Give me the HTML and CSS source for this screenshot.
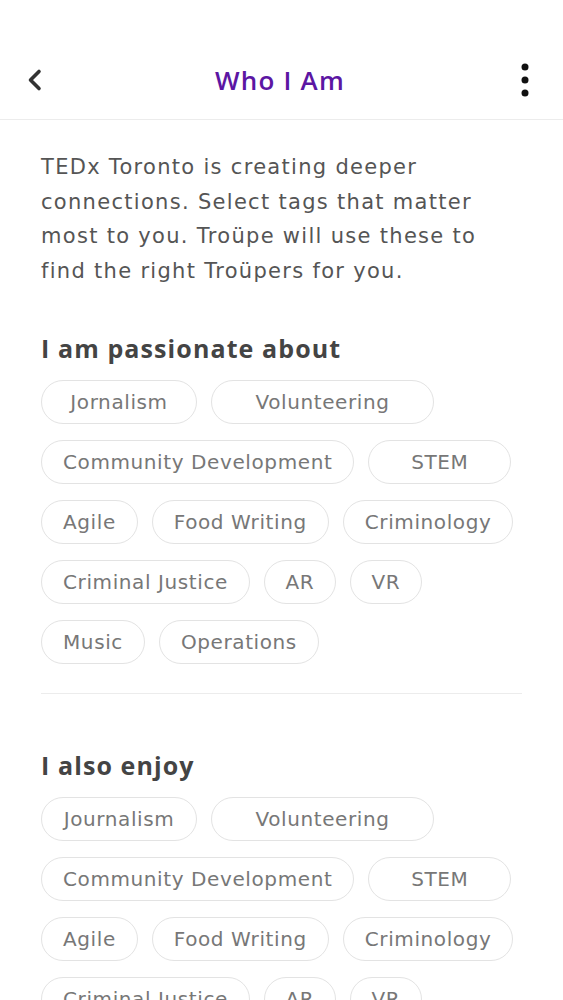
FILE: index.html
```html
<!DOCTYPE html>
<html lang="en">
<head>
    <meta charset="UTF-8">
    <meta name="viewport" content="width=device-width, initial-scale=1.0">
    <title>Who I Am</title>
    <link rel="stylesheet" href="styles.css">
</head>
<body>
    <!-- Top bar -->
    <header class="topbar">
        <button class="iconButton" aria-label="Back">
            <svg viewBox="0 0 24 24" width="24" height="24"><path d="M16 3.5 L7.5 12 L16 20.5" fill="none" stroke="#333" stroke-width="3.6" stroke-linecap="round" stroke-linejoin="round"/></svg>
        </button>
        <h1 class="title">Who I Am</h1>
        <button class="iconButton" aria-label="More">
            <svg viewBox="0 0 24 36" width="24" height="36"><circle cx="12" cy="5" r="3.5"/><circle cx="12" cy="18" r="3.5"/><circle cx="12" cy="31" r="3.5"/></svg>
        </button>
    </header>

    <main class="content">
        <p class="intro">TEDx Toronto is creating deeper connections. Select tags that matter most to you. Troüpe will use these to find the right Troüpers for you.</p>

        <section class="tagSection">
            <h2>I am passionate about</h2>
            <div class="tags">
                <span class="tag tag-156">Jornalism</span>
                <span class="tag tag-223">Volunteering</span>
                <span class="tag">Community Development</span>
                <span class="tag tag-143">STEM</span>
                <span class="tag">Agile</span>
                <span class="tag">Food Writing</span>
                <span class="tag">Criminology</span>
                <span class="tag">Criminal Justice</span>
                <span class="tag tag-72">AR</span>
                <span class="tag tag-72">VR</span>
                <span class="tag">Music</span>
                <span class="tag">Operations</span>
            </div>
        </section>

        <hr class="divider">

        <section class="tagSection">
            <h2>I also enjoy</h2>
            <div class="tags">
                <span class="tag tag-156">Journalism</span>
                <span class="tag tag-223">Volunteering</span>
                <span class="tag">Community Development</span>
                <span class="tag tag-143">STEM</span>
                <span class="tag">Agile</span>
                <span class="tag">Food Writing</span>
                <span class="tag">Criminology</span>
                <span class="tag">Criminal Justice</span>
                <span class="tag tag-72">AR</span>
                <span class="tag tag-72">VR</span>
                <span class="tag">Music</span>
                <span class="tag">Operations</span>
            </div>
        </section>
    </main>
</body>
</html>
```

FILE: styles.css
```css
/* General Styles */
body {
    font-family: 'DejaVu Sans', sans-serif;
    margin: 0;
    padding: 0;
    background: #fff;
    color: #555;
}

/* Top bar */
.topbar {
    display: flex;
    align-items: center;
    justify-content: space-between;
    height: 79px;
    padding: 40px 26px 0 23px;
    border-bottom: 1px solid #ececec;
}

.iconButton {
    background: none;
    border: none;
    padding: 0;
    width: 24px;
    display: flex;
    align-items: center;
    justify-content: center;
    cursor: pointer;
}

.iconButton svg {
    fill: #111;
}

.title {
    margin: 0;
    font-family: 'Open Sans', sans-serif;
    font-size: 26px;
    font-weight: 600;
    letter-spacing: 1.2px;
    color: #5c16a3;
}

/* Content */
.content {
    padding: 0 41px;
}

.intro {
    margin: 30px 0 0;
    font-size: 21px;
    line-height: 34.7px;
    letter-spacing: 1.3px;
    color: #555;
}

.tagSection h2 {
    margin: 0 0 16px;
    font-family: 'Open Sans', sans-serif;
    font-size: 25px;
    line-height: 32px;
    font-weight: 700;
    letter-spacing: 1.1px;
    color: #444;
}

.tagSection:first-of-type {
    margin-top: 43px;
}

.tags {
    display: flex;
    flex-wrap: wrap;
    gap: 16px 14px;
}

.tag {
    box-sizing: border-box;
    height: 44px;
    padding: 0 21px;
    display: flex;
    align-items: center;
    justify-content: center;
    border: 1px solid #e3e3e3;
    border-radius: 22px;
    font-size: 20px;
    letter-spacing: 0.6px;
    color: #777;
    cursor: pointer;
}

.tag-156 { width: 156px; }
.tag-223 { width: 223px; }
.tag-143 { width: 143px; }
.tag-72 { width: 72px; }

.divider {
    margin: 29px 0 55px;
    border: none;
    border-top: 1px solid #ececec;
}
```
